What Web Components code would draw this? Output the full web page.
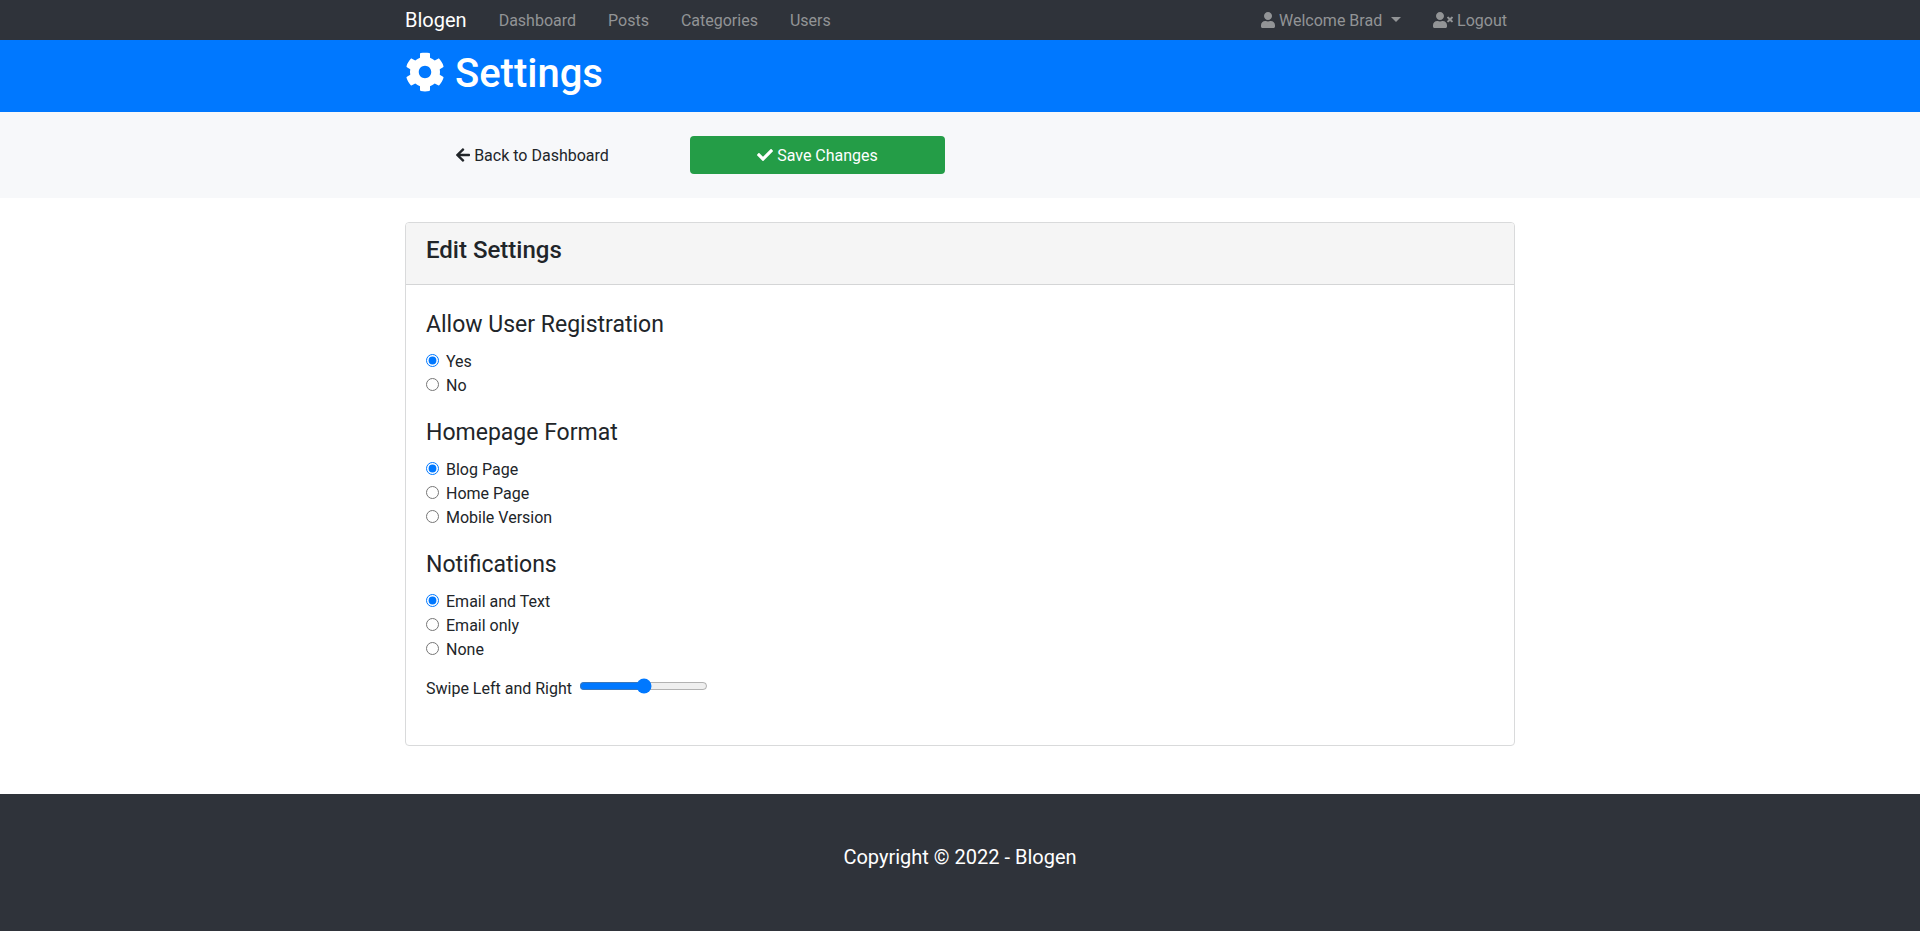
<!DOCTYPE html>
<html lang="en">
<head>
<meta charset="utf-8">
<meta name="viewport" content="width=device-width, initial-scale=1">
<title>Blogen - Settings</title>
<style>
body { margin: 0; background: #fff; color: #212529; font: 16px/24px Roboto, "Liberation Sans", sans-serif; }
</style>
</head>
<body>
<blog-app></blog-app>
<script>
const define = (name, html, setup) => customElements.define(name, class extends HTMLElement {
  constructor() {
    super();
    const t = document.createElement('template');
    t.innerHTML = html;
    this.attachShadow({ mode: 'open' }).append(t.content.cloneNode(true));
  }
  connectedCallback() { if (setup) setup(this, this.shadowRoot); }
});

/* Solid glyphs: [viewBox width, path], all 512 high */
const PERSON = 'M224 256c70.7 0 128-57.3 128-128S294.7 0 224 0 96 57.3 96 128s57.3 128 128 128zm89.6 32h-16.7c-22.2 10.2-46.9 16-72.9 16s-50.6-5.8-72.9-16h-16.7C60.2 288 0 348.2 0 422.4V464c0 26.500 21.500 48 48 48h352c26.500 0 48-21.500 48-48v-41.600c0-74.200-60.200-134.400-134.400-134.400z';
const ICONS = {
  user: [448, PERSON],
  'user-x': [640, PERSON + 'M589.6 240l45.6-45.6c6.300-6.300 6.300-16.500 0-22.800l-22.800-22.800c-6.300-6.300-16.500-6.300-22.800 0L544 194.400l-45.600-45.600c-6.300-6.300-16.500-6.300-22.800 0l-22.800 22.800c-6.300 6.300-6.300 16.500 0 22.800l45.600 45.600-45.600 45.600c-6.300 6.300-6.300 16.500 0 22.800l22.800 22.800c6.300 6.300 16.500 6.300 22.800 0l45.600-45.600 45.600 45.600c6.300 6.300 16.500 6.300 22.800 0l22.800-22.800c6.300-6.300 6.300-16.500 0-22.800L589.6 240z'],
  gear: [512, 'M487.4 315.7l-42.6-24.6c4.3-23.2 4.3-47 0-70.2l42.6-24.6c4.9-2.8 7.1-8.6 5.5-14-11.1-35.6-30-67.8-54.7-94.6-3.8-4.1-10-5.1-14.8-2.3L380.8 110c-17.9-15.4-38.5-27.3-60.8-35.1V25.8c0-5.600-3.900-10.500-9.400-11.700-36.700-8.200-74.300-7.800-109.200 0-5.500 1.200-9.400 6.100-9.400 11.700V75c-22.200 7.900-42.800 19.800-60.800 35.100L88.700 85.500c-4.900-2.800-11-1.900-14.800 2.300-24.700 26.700-43.600 58.900-54.700 94.600-1.700 5.400.6 11.200 5.500 14L67.300 221c-4.300 23.200-4.300 47 0 70.200l-42.600 24.600c-4.900 2.800-7.100 8.600-5.500 14 11.100 35.600 30 67.800 54.700 94.600 3.800 4.100 10 5.100 14.800 2.300l42.600-24.600c17.900 15.400 38.500 27.300 60.800 35.100v49.200c0 5.600 3.900 10.500 9.400 11.700 36.700 8.200 74.300 7.800 109.200 0 5.500-1.200 9.400-6.100 9.400-11.700v-49.200c22.200-7.900 42.800-19.800 60.800-35.100l42.600 24.600c4.900 2.800 11 1.900 14.800-2.300 24.700-26.700 43.600-58.900 54.700-94.600 1.500-5.500-.7-11.300-5.600-14.100zM256 336c-44.100 0-80-35.900-80-80s35.900-80 80-80 80 35.900 80 80-35.900 80-80 80z'],
  back: [448, 'M257.5 445.1l-22.2 22.2c-9.4 9.4-24.6 9.4-33.9 0L7 273c-9.4-9.4-9.4-24.6 0-33.900L201.400 44.700c9.400-9.400 24.600-9.400 33.900 0l22.200 22.200c9.500 9.500 9.300 25-.4 34.300L136.600 216H424c13.300 0 24 10.700 24 24v32c0 13.300-10.700 24-24 24H136.600l120.500 114.800c9.800 9.300 10 24.800.4 34.300z'],
  check: [512, 'M173.9 439.4l-166.4-166.4c-10-10-10-26.200 0-36.200l36.200-36.200c10-10 26.200-10 36.200 0L192 312.700 432.100 72.600c10-10 26.200-10 36.200 0l36.200 36.200c10 10 10 26.200 0 36.200l-294.400 294.400c-10 10-26.200 10-36.200 0z']
};

define('blog-icon', `
<style>
:host { display: inline-block; vertical-align: -2px; font-size: 16px; line-height: 1; }
:host([name="gear"]) { vertical-align: -5px; font-size: 40px; }
svg { display: block; height: 1em; fill: currentColor; }
</style><svg aria-hidden="true"><path/></svg>`, (el, root) => {
  const [w, d] = ICONS[el.getAttribute('name')];
  root.querySelector('svg').setAttribute('viewBox', `0 0 ${w} 512`);
  root.querySelector('path').setAttribute('d', d);
});

define('blog-container', `
<style>
:host { display: block; box-sizing: border-box; width: 100%; max-width: 1140px; margin: 0 auto; padding: 0 15px; }
</style><slot></slot>`);

define('blog-navbar', `
<style>
:host { display: block; background: #2f333a; color: #929496; }
nav, ul { display: flex; flex-wrap: wrap; align-items: center; }
ul { list-style: none; margin: 0; padding: 0; }
a { display: block; padding: 9px 16px 7px; color: inherit; text-decoration: none; }
.brand { padding: 5px 0; margin-right: 16px; color: #fff; font-size: 20px; line-height: 30px; }
.account { margin-left: auto; }
.account a { padding: 9px 8px 7px; margin-left: 16px; }
.caret { display: inline-block; margin-left: 5px; vertical-align: 4px; border: 5px solid transparent; border-top-color: currentColor; border-bottom: 0; }
</style>
<blog-container><nav aria-label="Main">
<a class="brand" href="#">Blogen</a>
<ul><li><a href="#">Dashboard</a></li><li><a href="#">Posts</a></li><li><a href="#">Categories</a></li><li><a href="#">Users</a></li></ul>
<ul class="account"><li><a href="#"><blog-icon name="user"></blog-icon> Welcome Brad <span class="caret"></span></a></li><li><a href="#"><blog-icon name="user-x"></blog-icon> Logout</a></li></ul>
</nav></blog-container>`);

define('blog-banner', `
<style>
:host { display: block; background: #0078ff; color: #fff; }
h1 { margin: 0; padding: 9px 0 13px; font-size: 40px; line-height: 50px; font-weight: 500; }
</style><blog-container><h1><slot></slot></h1></blog-container>`);

define('blog-actions', `
<style>
:host { display: block; background: #f7f8fa; padding: 24px 0; }
.row { display: grid; grid-template-columns: repeat(4, 1fr); gap: 30px; }
a, button { box-sizing: border-box; display: block; width: 100%; height: 38px; padding: 7px 12px 5px; border: 1px solid transparent; border-radius: 4px; background: none; font: inherit; line-height: 24px; text-align: center; text-decoration: none; color: #212529; white-space: nowrap; }
button { background: #249d47; color: #fff; }
</style><blog-container><div class="row">
<a href="#"><blog-icon name="back"></blog-icon> Back to Dashboard</a>
<button type="button"><blog-icon name="check"></blog-icon> Save Changes</button>
</div></blog-container>`);

define('blog-card', `
<style>
:host { display: block; border: 1px solid #d9dadb; border-radius: 4px; overflow: hidden; }
header { padding: 13px 20px 19px; background: #f5f5f5; border-bottom: 1px solid #d4d5d6; }
h2 { margin: 0; font-size: 24px; line-height: 29px; font-weight: 500; }
.body { padding: 20px; }
</style><header><h2><slot name="title"></slot></h2></header><div class="body"><slot></slot></div>`);

define('blog-radios', `
<style>
:host { display: block; margin-bottom: 15px; }
fieldset { margin: 0; padding: 0; border: 0; }
legend { padding: 0; margin-bottom: 5px; font-size: 23px; line-height: 40px; }
label { display: flex; width: max-content; gap: 7px; line-height: 24px; }
input { width: 13px; height: 13px; margin: 4px 0 0; accent-color: #0078ff; }
</style><fieldset><legend></legend></fieldset>`, (el, root) => {
  const label = el.getAttribute('label');
  root.querySelector('legend').textContent = label;
  el.getAttribute('options').split('|').forEach((text, i) => {
    const row = document.createElement('label');
    const input = document.createElement('input');
    input.type = 'radio';
    input.name = label;
    input.checked = i === 0;
    row.append(input, text);
    root.querySelector('fieldset').append(row);
  });
});

define('blog-slider', `
<style>
:host { display: flex; align-items: flex-start; gap: 5px; margin-bottom: 24px; line-height: 24px; }
input { width: 129px; height: 16px; margin: 1px 2px; accent-color: #0078ff; }
</style><label for="swipe"><slot></slot></label><input id="swipe" type="range">`);

define('blog-footer', `
<style>
:host { display: block; flex: 1; background: #2f333a; color: #fff; padding: 48px; text-align: center; }
p { margin: 0 0 16px; font-size: 20px; line-height: 30px; }
</style><footer><p><slot></slot></p></footer>`);

define('blog-app', `
<style>
:host { display: flex; flex-direction: column; min-height: 100vh; }
main { padding: 24px 0 48px; }
</style>
<blog-navbar></blog-navbar>
<blog-banner><blog-icon name="gear"></blog-icon> Settings</blog-banner>
<blog-actions></blog-actions>
<main><blog-container><blog-card><span slot="title">Edit Settings</span>
<form>
<blog-radios label="Allow User Registration" options="Yes|No"></blog-radios>
<blog-radios label="Homepage Format" options="Blog Page|Home Page|Mobile Version"></blog-radios>
<blog-radios label="Notifications" options="Email and Text|Email only|None"></blog-radios>
<blog-slider>Swipe Left and Right</blog-slider>
</form></blog-card></blog-container></main>
<blog-footer>Copyright © 2022 - Blogen</blog-footer>`);
</script>
</body>
</html>
